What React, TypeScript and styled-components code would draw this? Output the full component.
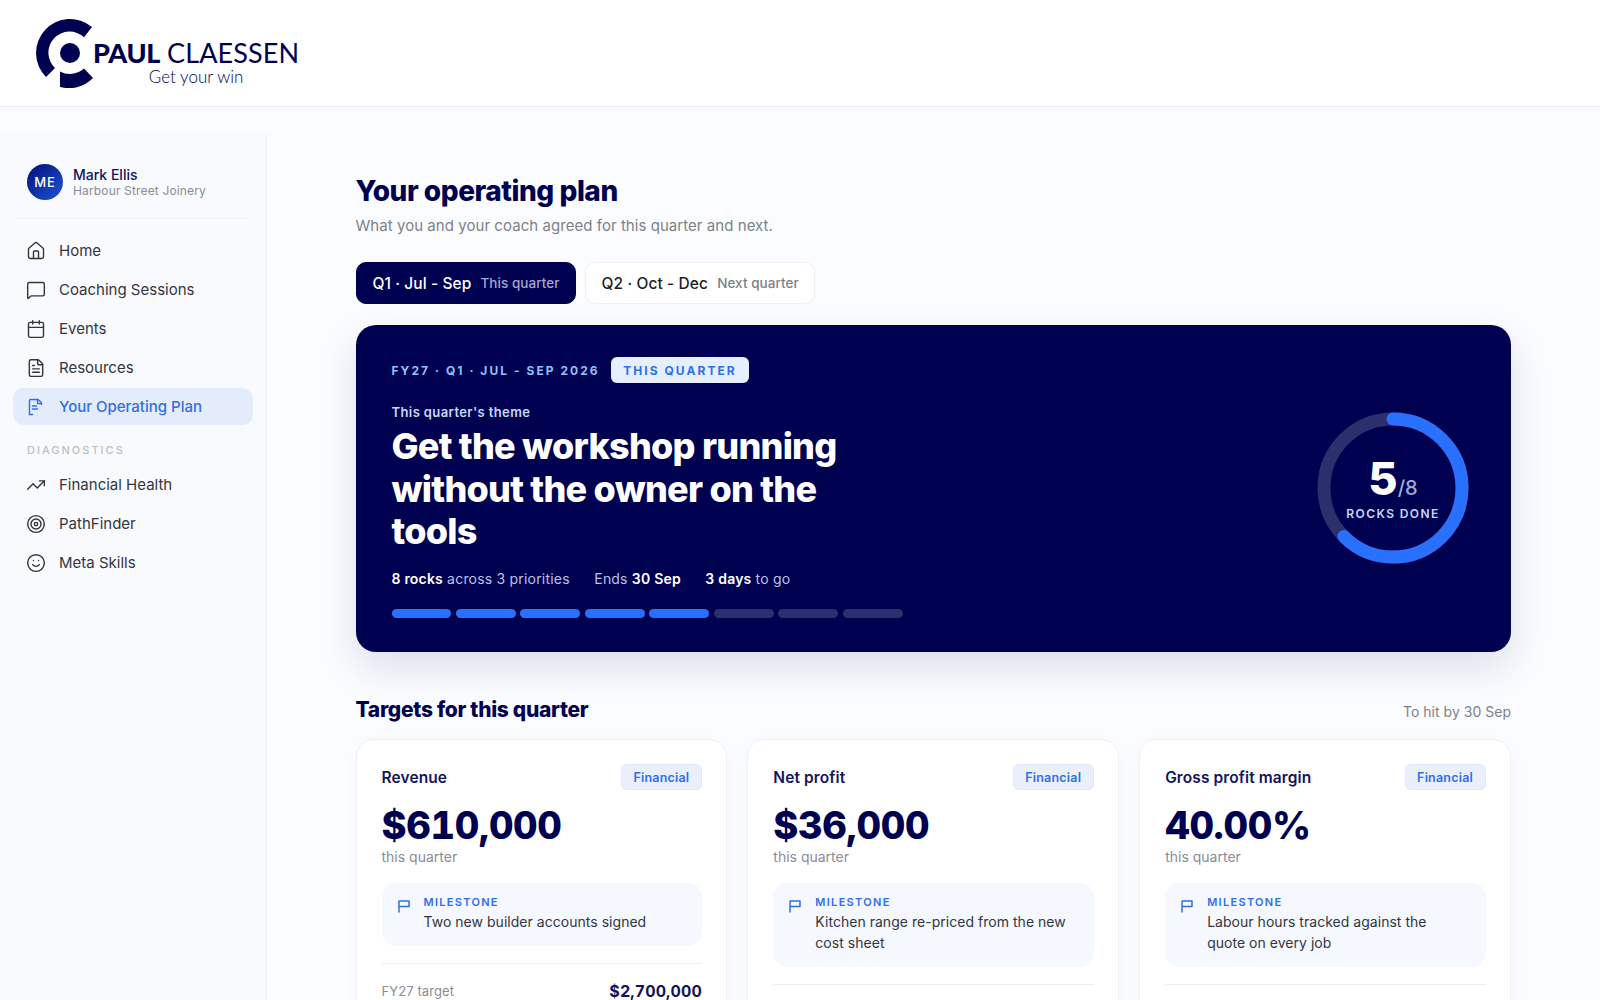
import styled, { createGlobalStyle } from "styled-components";
import { House, MessageSquare, Calendar, FileText, TrendingUp, Target, Smile } from "lucide-react";

const GlobalStyle = createGlobalStyle`
  html, body {
    margin: 0;
    padding: 0;
    background: #fbfcff;
    font-family: Inter, "Liberation Sans", sans-serif;
    color: #000050;
  }
  * { box-sizing: border-box; }
  #root { height: 100vh; overflow: hidden; }
`;

const PlanIcon = () => (
  <svg width="20" height="20" viewBox="-1 -1 20 20" fill="none" stroke="currentColor" strokeWidth="1.4" strokeLinecap="round" strokeLinejoin="round">
    <path d="M2.5 16.5V2.5a1 1 0 0 1 1-1h7.5l3.5 3-.2 1.8" />
    <path d="M10.5 1.5v4h4" />
    <path d="M5.5 8h4M5.5 11h5M2.5 16.5h3" />
  </svg>
);

const FlagIcon = () => (
  <svg width="14" height="14" viewBox="0 0 14 14" fill="none" stroke="currentColor" strokeWidth="1.5" strokeLinecap="round" strokeLinejoin="round">
    <path d="M2 13V2h10v5.5H2" />
  </svg>
);

const LogoMark = () => (
  <svg width="66" height="70" viewBox="35 18 66 70" fill="#000050">
    <path d="M92 27A34 34 0 0 0 46 77L55 68A21 21 0 0 1 84 37.3Z" />
    <path d="M60 71.5L60 87A34 34 0 0 0 93 78L84 68.6A21 21 0 0 1 60 71.5Z" />
    <circle cx="70" cy="53" r="10" />
  </svg>
);

const navItems = [
  { label: "Home", icon: <House size={20} strokeWidth={1.7} /> },
  { label: "Coaching Sessions", icon: <MessageSquare size={20} strokeWidth={1.7} /> },
  { label: "Events", icon: <Calendar size={20} strokeWidth={1.7} /> },
  { label: "Resources", icon: <FileText size={20} strokeWidth={1.7} /> },
  { label: "Your Operating Plan", icon: <PlanIcon />, active: true },
];

const diagItems = [
  { label: "Financial Health", icon: <TrendingUp size={20} strokeWidth={1.7} /> },
  { label: "PathFinder", icon: <Target size={20} strokeWidth={1.7} /> },
  { label: "Meta Skills", icon: <Smile size={20} strokeWidth={1.7} /> },
];

const targets = [
  { name: "Revenue", value: "$610,000", milestone: "Two new builder accounts signed", fy: "$2,700,000" },
  { name: "Net profit", value: "$36,000", milestone: "Kitchen range re-priced from the new cost sheet", fy: "$160,000" },
  { name: "Gross profit margin", value: "40.00%", milestone: "Labour hours tracked against the quote on every job", fy: "40.00%" },
];

const App = () => {
  const radius = 69;
  const circumference = 2 * Math.PI * radius;
  return (
    <>
      <GlobalStyle />
      <Header>
        <Logo>
          <LogoMark />
          <LogoWords>
            <LogoName><b>PAUL</b> CLAESSEN</LogoName>
            <LogoTag>Get your win</LogoTag>
          </LogoWords>
        </Logo>
      </Header>
      <Layout>
        <Sidebar>
          <UserRow>
            <Avatar>ME</Avatar>
            <div>
              <UserName>Mark Ellis</UserName>
              <UserCompany>Harbour Street Joinery</UserCompany>
            </div>
          </UserRow>
          {navItems.map((item) => (
            <NavItem key={item.label} $active={item.active}>
              {item.icon}
              {item.label}
            </NavItem>
          ))}
          <NavHeading>DIAGNOSTICS</NavHeading>
          {diagItems.map((item) => (
            <NavItem key={item.label}>
              {item.icon}
              {item.label}
            </NavItem>
          ))}
        </Sidebar>
        <Main>
          <Title>Your operating plan</Title>
          <Subtitle>What you and your coach agreed for this quarter and next.</Subtitle>
          <Tabs>
            <Tab $active>
              Q1 · Jul - Sep <TabNote $active>This quarter</TabNote>
            </Tab>
            <Tab>
              Q2 · Oct - Dec <TabNote>Next quarter</TabNote>
            </Tab>
          </Tabs>
          <Hero>
            <HeroText>
              <EyebrowRow>
                <Eyebrow>FY27 · Q1 · JUL - SEP 2026</Eyebrow>
                <HeroBadge>THIS QUARTER</HeroBadge>
              </EyebrowRow>
              <ThemeLabel>This quarter's theme</ThemeLabel>
              <HeroTitle>Get the workshop running without the owner on the tools</HeroTitle>
              <HeroMeta>
                <span><b>8 rocks</b> across 3 priorities</span>
                <span>Ends <b>30 Sep</b></span>
                <span><b>3 days</b> to go</span>
              </HeroMeta>
              <Bars>
                {Array.from({ length: 8 }).map((_, i) => (
                  <Bar key={i} $done={i < 5} />
                ))}
              </Bars>
            </HeroText>
            <Ring>
              <svg width="152" height="152" viewBox="0 0 152 152">
                <circle cx="76" cy="76" r={radius} fill="none" stroke="#2b2f6c" strokeWidth="13" />
                <circle
                  cx="76"
                  cy="76"
                  r={radius}
                  fill="none"
                  stroke="#2970ff"
                  strokeWidth="13"
                  strokeLinecap="round"
                  strokeDasharray={`${circumference * 0.625} ${circumference}`}
                  transform="rotate(-90 76 76)"
                />
              </svg>
              <RingLabel>
                <RingCount>5<small>/8</small></RingCount>
                <RingCaption>ROCKS DONE</RingCaption>
              </RingLabel>
            </Ring>
          </Hero>
          <SectionHead>
            <SectionTitle>Targets for this quarter</SectionTitle>
            <SectionNote>To hit by 30 Sep</SectionNote>
          </SectionHead>
          <Cards>
            {targets.map((t) => (
              <Card key={t.name}>
                <CardHead>
                  <CardName>{t.name}</CardName>
                  <Tag>Financial</Tag>
                </CardHead>
                <CardValue>{t.value}</CardValue>
                <CardPeriod>this quarter</CardPeriod>
                <Milestone>
                  <MilestoneIcon><FlagIcon /></MilestoneIcon>
                  <div>
                    <MilestoneLabel>MILESTONE</MilestoneLabel>
                    <MilestoneText>{t.milestone}</MilestoneText>
                  </div>
                </Milestone>
                <FyRow>
                  <span>FY27 target</span>
                  <b>{t.fy}</b>
                </FyRow>
              </Card>
            ))}
          </Cards>
        </Main>
      </Layout>
    </>
  );
};

const Header = styled.header`
  height: 107px;
  background: #fff;
  border-bottom: 1px solid #eceef2;
  padding: 18px 35px;
  box-shadow: 0 1px 3px rgba(0, 0, 80, 0.03);
`;
const Logo = styled.div`
  display: flex;
  align-items: flex-start;
  color: #000050;
`;
const LogoWords = styled.div`
  margin-left: -8px;
  padding-top: 22px;
  display: flex;
  flex-direction: column;
  align-items: center;
  font-family: Lato, "Open Sans", sans-serif;
`;
const LogoName = styled.div`
  font-size: 27px;
  line-height: 26px;
  font-weight: 400;
  letter-spacing: 0.1px;
  white-space: nowrap;
  b { font-weight: 900; letter-spacing: -0.3px; }
`;
const LogoTag = styled.div`
  margin-top: 1px;
  font-size: 17px;
  line-height: 20px;
  font-weight: 300;
`;
const Layout = styled.div`
  display: flex;
  margin-top: 27px;
`;
const Sidebar = styled.aside`
  width: 267px;
  flex: none;
  min-height: 866px;
  background: #f9fafd;
  border-right: 1px solid #f0f2f6;
  padding: 30px 13px 0;
`;
const UserRow = styled.div`
  display: flex;
  align-items: center;
  gap: 10px;
  margin: 0 2px 13px;
  padding: 0 0 18px 12px;
  border-bottom: 1px solid #f0f2f6;
`;
const Avatar = styled.div`
  width: 36px;
  height: 36px;
  border-radius: 50%;
  background: linear-gradient(135deg, #000f7a, #1f55d6);
  color: #fff;
  font-size: 13px;
  font-weight: 500;
  letter-spacing: 1px;
  display: flex;
  align-items: center;
  justify-content: center;
`;
const UserName = styled.div`
  font-size: 14px;
  line-height: 17px;
  padding-top: 1px;
  font-weight: 500;
  color: #14145c;
`;
const UserCompany = styled.div`
  font-size: 12px;
  line-height: 16px;
  color: #8a8d96;
  letter-spacing: 0.15px;
`;
const NavItem = styled.div<{ $active?: boolean }>`
  height: 37px;
  margin-bottom: 2px;
  display: flex;
  align-items: center;
  gap: 13px;
  padding: 0 13px;
  border-radius: 10px;
  font-size: 15px;
  font-weight: ${({ $active }) => ($active ? 500 : 400)};
  color: ${({ $active }) => ($active ? "#2f6fe8" : "#33363f")};
  background: ${({ $active }) => ($active ? "#e4ecfb" : "transparent")};
  svg { flex: none; }
`;
const NavHeading = styled.div`
  font-size: 11px;
  font-weight: 500;
  letter-spacing: 2px;
  color: #bcbfc6;
  padding: 16px 14px 9px;
  line-height: 14px;
`;
const Main = styled.main`
  flex: 1;
  padding: 36px 89px 0 88.5px;
`;
const Title = styled.h1`
  margin: 0;
  font-size: 28px;
  line-height: 42px;
  font-weight: 800;
  letter-spacing: -0.45px;
`;
const Subtitle = styled.p`
  margin: 3px 0 0;
  font-size: 15px;
  line-height: 22px;
  letter-spacing: 0.05px;
  color: #7e818a;
`;
const Tabs = styled.div`
  display: flex;
  gap: 8.5px;
  margin-top: 25px;
`;
const Tab = styled.div<{ $active?: boolean }>`
  height: 42px;
  padding: 0 15.5px 0 16px;
  display: flex;
  align-items: center;
  gap: 9px;
  border-radius: 10px;
  font-size: 15.5px;
  font-weight: 500;
  letter-spacing: 0.1px;
  color: ${({ $active }) => ($active ? "#fff" : "#1c1e26")};
  background: ${({ $active }) => ($active ? "#000050" : "#fff")};
  border: 1px solid ${({ $active }) => ($active ? "#000050" : "#eef0f4")};
`;
const TabNote = styled.span<{ $active?: boolean }>`
  font-size: 13.5px;
  font-weight: 500;
  letter-spacing: 0.05px;
  color: ${({ $active }) => ($active ? "#a5a8cc" : "#7e818a")};
`;
const Hero = styled.section`
  margin-top: 21px;
  height: 327px;
  padding: 32px 42px 0 36px;
  display: flex;
  justify-content: space-between;
  align-items: flex-start;
  background: #000050;
  border-radius: 20px;
  box-shadow: 0 16px 40px rgba(0, 0, 80, 0.12);
`;
const HeroText = styled.div`
  width: 511px;
`;
const EyebrowRow = styled.div`
  display: flex;
  align-items: center;
  gap: 11.5px;
`;
const Eyebrow = styled.span`
  font-size: 12px;
  font-weight: 700;
  letter-spacing: 2.05px;
  color: #8fc0ff;
  white-space: nowrap;
`;
const HeroBadge = styled.span`
  height: 26px;
  padding: 0 12px;
  display: inline-flex;
  align-items: center;
  border-radius: 6px;
  background: #e6effe;
  color: #2f6fe8;
  font-size: 12px;
  font-weight: 700;
  letter-spacing: 2.05px;
  white-space: nowrap;
`;
const ThemeLabel = styled.div`
  margin-top: 20px;
  font-size: 13px;
  line-height: 18px;
  font-weight: 600;
  letter-spacing: 0.4px;
  color: #c6d9fb;
`;
const HeroTitle = styled.h2`
  margin: 4px 0 0;
  width: 470px;
  font-size: 36px;
  line-height: 42.5px;
  font-weight: 800;
  letter-spacing: -0.75px;
  color: #fff;
`;
const HeroMeta = styled.div`
  margin-top: 16.5px;
  display: flex;
  gap: 24.5px;
  font-size: 14px;
  line-height: 20px;
  letter-spacing: 0.2px;
  color: #bcc0e6;
  white-space: nowrap;
  b { color: #fff; font-weight: 600; }
`;
const Bars = styled.div`
  margin-top: 19.5px;
  display: grid;
  grid-template-columns: repeat(8, 1fr);
  gap: 4.5px;
`;
const Bar = styled.div<{ $done?: boolean }>`
  height: 9px;
  border-radius: 5px;
  background: ${({ $done }) => ($done ? "#2970ff" : "#2b2f6c")};
`;
const Ring = styled.div`
  position: relative;
  width: 152px;
  height: 152px;
  margin-top: 55px;
`;
const RingLabel = styled.div`
  position: absolute;
  inset: 0;
  padding-top: 2px;
  display: flex;
  flex-direction: column;
  align-items: center;
  justify-content: center;
`;
const RingCount = styled.div`
  font-size: 45px;
  line-height: 46px;
  font-weight: 800;
  color: #fff;
  small {
    font-size: 20px;
    font-weight: 500;
    color: #a5a8d8;
  }
`;
const RingCaption = styled.div`
  margin-top: -5px;
  font-size: 12px;
  line-height: 16px;
  font-weight: 600;
  letter-spacing: 1.4px;
  color: #c6d9fb;
`;
const SectionHead = styled.div`
  margin-top: 44px;
  display: flex;
  justify-content: space-between;
  align-items: center;
`;
const SectionTitle = styled.h3`
  margin: 0;
  font-size: 21px;
  line-height: 28px;
  font-weight: 800;
  letter-spacing: -0.3px;
`;
const SectionNote = styled.span`
  padding-top: 3px;
  font-size: 14px;
  letter-spacing: 0.02px;
  color: #7e818a;
`;
const Cards = styled.div`
  margin-top: 15px;
  display: grid;
  grid-template-columns: repeat(3, 1fr);
  gap: 20px;
`;
const Card = styled.article`
  padding: 24px 24.5px 24px 25px;
  background: #fff;
  border: 1px solid #eff1f5;
  border-radius: 18px;
  box-shadow: 0 6px 20px rgba(0, 0, 80, 0.03);
`;
const CardHead = styled.div`
  display: flex;
  justify-content: space-between;
  align-items: center;
`;
const CardName = styled.div`
  font-size: 15.5px;
  font-weight: 600;
  letter-spacing: 0.1px;
  color: #14145c;
`;
const Tag = styled.span`
  height: 26px;
  padding: 0 11.5px;
  display: inline-flex;
  align-items: center;
  border-radius: 6px;
  background: #e9f0fc;
  border: 1px solid #e0e9f9;
  color: #2f6fe8;
  font-size: 12.5px;
  font-weight: 600;
  letter-spacing: 0.2px;
`;
const CardValue = styled.div`
  margin-top: 13px;
  font-size: 38px;
  line-height: 44px;
  font-weight: 800;
  letter-spacing: -0.3px;
  font-variant-numeric: tabular-nums;
`;
const CardPeriod = styled.div`
  font-size: 14px;
  line-height: 20px;
  color: #8a8d96;
`;
const Milestone = styled.div`
  margin-top: 16px;
  padding: 12px 20px 14px 15px;
  display: flex;
  gap: 13px;
  background: #f5f8fe;
  border-radius: 14px;
`;
const MilestoneIcon = styled.div`
  padding-top: 2px;
  color: #2f6fe8;
  flex: none;
`;
const MilestoneLabel = styled.div`
  font-size: 11px;
  line-height: 14px;
  font-weight: 600;
  letter-spacing: 1.3px;
  color: #2f6fe8;
`;
const MilestoneText = styled.div`
  margin-top: 2px;
  font-size: 14px;
  line-height: 21px;
  letter-spacing: 0.03px;
  color: #33363f;
`;
const FyRow = styled.div`
  margin-top: 17px;
  padding-top: 16.5px;
  border-top: 1px solid #eceef2;
  display: flex;
  justify-content: space-between;
  align-items: center;
  font-size: 13px;
  letter-spacing: 0.1px;
  color: #8a8d96;
  b {
    font-size: 16px;
    font-weight: 700;
    color: #14145c;
    font-variant-numeric: tabular-nums;
  }
`;

export default App;
